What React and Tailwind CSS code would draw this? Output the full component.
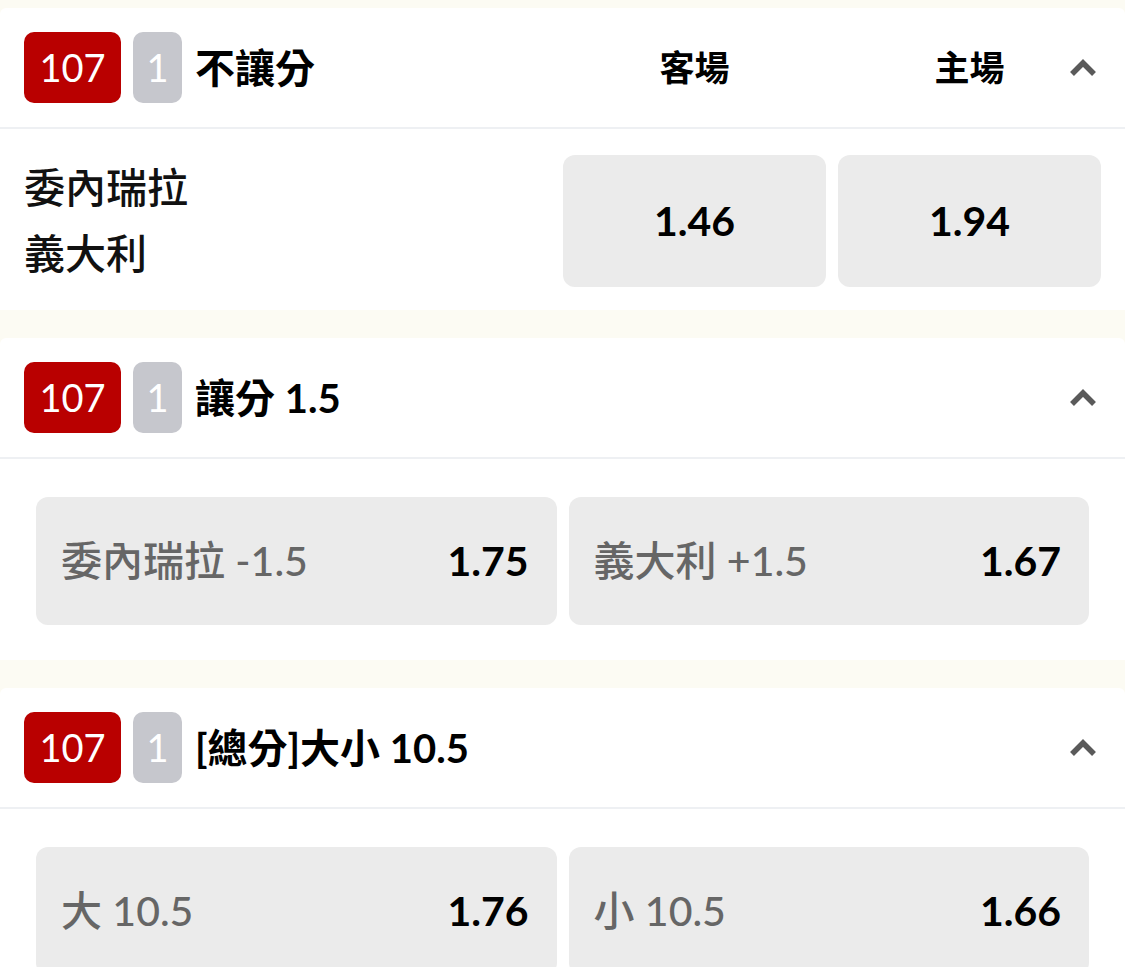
import { useState } from "react";

const font = { fontFamily: 'Lato, "Noto Sans CJK TC", "Noto Sans", sans-serif' };

const Chevron = () => (
  <svg width="28" height="18" viewBox="0 0 28 18" className="absolute right-[28px] top-1/2 -translate-y-1/2">
    <polyline points="3,15 14,4 25,15" fill="none" stroke="#5a5a5a" strokeWidth="5.5" />
  </svg>
);

const Header = ({ title, cols }) => (
  <div className="relative flex items-center h-[121px] px-6 border-b-2 border-[#eef0f3]">
    <div className="flex items-center gap-3">
      <span className="w-[97px] h-[71px] rounded-[10px] bg-[#b90000] text-white text-[38px] flex items-center justify-center">107</span>
      <span className="w-[49px] h-[71px] rounded-[10px] bg-[#c6c7cd] text-white text-[38px] flex items-center justify-center">1</span>
    </div>
    <span className="ml-[13px] text-[40px] font-bold text-black flex-1">{title}</span>
    {cols && (
      <div className="flex gap-3">
        {cols.map((c) => (
          <span key={c} className="w-[263px] text-center text-[35px] font-bold text-black">{c}</span>
        ))}
      </div>
    )}
    <Chevron />
  </div>
);

const Pick = ({ label, odds }) => (
  <button className="flex-1 h-[128px] rounded-[12px] bg-[#ebebeb] flex items-center justify-between pl-[25px] pr-[28px]">
    <span className="text-[41px] font-medium text-[#666666]">{label}</span>
    <span className="text-[41px] font-bold text-black">{odds}</span>
  </button>
);

export default function App() {
  const [open] = useState(true);

  return (
    <div style={font} className="min-h-screen bg-[#fcfbf3] pt-2 flex flex-col gap-7">
      {/* 不讓分 */}
      <div className="bg-white rounded-t-md">
        <Header title="不讓分" cols={["客場", "主場"]} />
        {open && (
          <div className="flex items-center px-6 pt-[26px] pb-[23px]">
            <div className="flex-1 text-[41px] font-medium text-[#111] leading-[66px]">
              <div>委內瑞拉</div>
              <div>義大利</div>
            </div>
            <div className="flex gap-3">
              <button className="w-[263px] h-[132px] rounded-[12px] bg-[#ebebeb] text-[41px] font-bold text-black">1.46</button>
              <button className="w-[263px] h-[132px] rounded-[12px] bg-[#ebebeb] text-[41px] font-bold text-black">1.94</button>
            </div>
          </div>
        )}
      </div>

      {/* 讓分 */}
      <div className="bg-white rounded-t-md">
        <Header title="讓分 1.5" />
        <div className="flex gap-3 px-9 pt-[38px] pb-[35px]">
          <Pick label="委內瑞拉 -1.5" odds="1.75" />
          <Pick label="義大利 +1.5" odds="1.67" />
        </div>
      </div>

      {/* 大小 */}
      <div className="bg-white rounded-t-md">
        <Header title="[總分]大小 10.5" />
        <div className="flex gap-3 px-9 pt-[38px] pb-[35px]">
          <Pick label="大 10.5" odds="1.76" />
          <Pick label="小 10.5" odds="1.66" />
        </div>
      </div>
    </div>
  );
}
